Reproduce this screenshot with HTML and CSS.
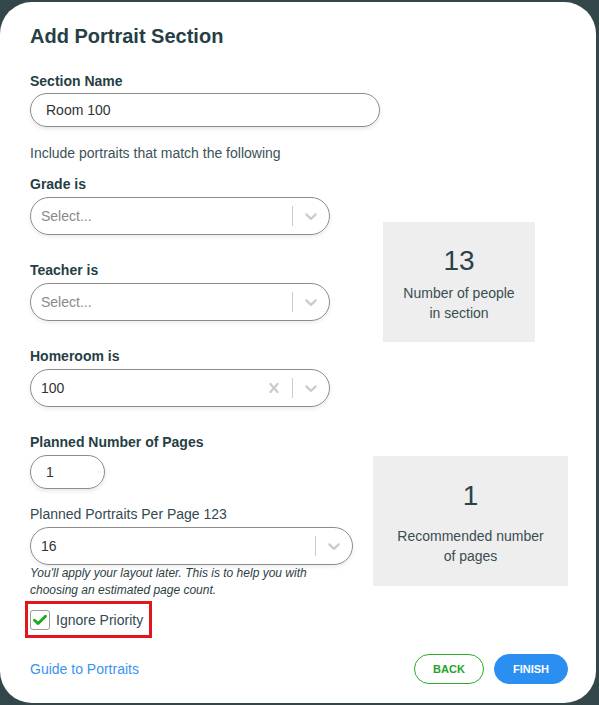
FILE: index.html
```html
<!DOCTYPE html>
<html lang="en">
<head>
<meta charset="utf-8">
<title>Add Portrait Section</title>
<link rel="stylesheet" href="styles.css">
</head>
<body>
<div class="modal">
  <h1 class="title">Add Portrait Section</h1>
  <div class="label label-first">Section Name</div>
  <div class="text-input name-input">Room 100</div>
  <p class="hint">Include portraits that match the following</p>

  <div class="row row-filters">
    <div class="col col-filters">
      <div class="field">
        <div class="label">Grade is</div>
        <div class="select">
          <span class="select-value placeholder">Select...</span>
          <span class="sep"></span>
          <span class="ind"><svg viewBox="0 0 20 20" width="20" height="20"><path d="M4.516 7.548c0.436-0.446 1.043-0.481 1.576 0l3.908 3.747 3.908-3.747c0.533-0.481 1.141-0.446 1.574 0 0.436 0.445 0.408 1.197 0 1.615-0.406 0.418-4.695 4.502-4.695 4.502-0.217 0.223-0.502 0.335-0.787 0.335s-0.57-0.112-0.789-0.335c0 0-4.287-4.084-4.695-4.502s-0.436-1.17 0-1.615z"/></svg></span>
        </div>
      </div>
      <div class="field field-next">
        <div class="label">Teacher is</div>
        <div class="select">
          <span class="select-value placeholder">Select...</span>
          <span class="sep"></span>
          <span class="ind"><svg viewBox="0 0 20 20" width="20" height="20"><path d="M4.516 7.548c0.436-0.446 1.043-0.481 1.576 0l3.908 3.747 3.908-3.747c0.533-0.481 1.141-0.446 1.574 0 0.436 0.445 0.408 1.197 0 1.615-0.406 0.418-4.695 4.502-4.695 4.502-0.217 0.223-0.502 0.335-0.787 0.335s-0.57-0.112-0.789-0.335c0 0-4.287-4.084-4.695-4.502s-0.436-1.17 0-1.615z"/></svg></span>
        </div>
      </div>
      <div class="field field-next">
        <div class="label">Homeroom is</div>
        <div class="select">
          <span class="select-value">100</span>
          <span class="ind"><svg viewBox="0 0 20 20" width="20" height="20"><path d="M14.348 14.849c-0.469 0.469-1.229 0.469-1.697 0l-2.651-3.030-2.651 3.029c-0.469 0.469-1.229 0.469-1.697 0-0.469-0.469-0.469-1.229 0-1.697l2.758-3.15-2.759-3.152c-0.469-0.469-0.469-1.228 0-1.697s1.228-0.469 1.697 0l2.652 3.031 2.651-3.031c0.469-0.469 1.228-0.469 1.697 0s0.469 1.229 0 1.697l-2.758 3.152 2.758 3.15c0.469 0.469 0.469 1.229 0 1.698z"/></svg></span>
          <span class="sep"></span>
          <span class="ind"><svg viewBox="0 0 20 20" width="20" height="20"><path d="M4.516 7.548c0.436-0.446 1.043-0.481 1.576 0l3.908 3.747 3.908-3.747c0.533-0.481 1.141-0.446 1.574 0 0.436 0.445 0.408 1.197 0 1.615-0.406 0.418-4.695 4.502-4.695 4.502-0.217 0.223-0.502 0.335-0.787 0.335s-0.57-0.112-0.789-0.335c0 0-4.287-4.084-4.695-4.502s-0.436-1.17 0-1.615z"/></svg></span>
        </div>
      </div>
    </div>
    <div class="stat stat-people">
      <div class="stat-num">13</div>
      <div class="stat-label">Number of people<br>in section</div>
    </div>
  </div>

  <div class="row row-pages">
    <div class="col col-pages">
      <div class="label">Planned Number of Pages</div>
      <div class="text-input pages-input">1</div>
      <div class="plain-label">Planned Portraits Per Page 123</div>
      <div class="select">
        <span class="select-value">16</span>
        <span class="sep"></span>
        <span class="ind"><svg viewBox="0 0 20 20" width="20" height="20"><path d="M4.516 7.548c0.436-0.446 1.043-0.481 1.576 0l3.908 3.747 3.908-3.747c0.533-0.481 1.141-0.446 1.574 0 0.436 0.445 0.408 1.197 0 1.615-0.406 0.418-4.695 4.502-4.695 4.502-0.217 0.223-0.502 0.335-0.787 0.335s-0.57-0.112-0.789-0.335c0 0-4.287-4.084-4.695-4.502s-0.436-1.17 0-1.615z"/></svg></span>
      </div>
      <p class="help">You'll apply your layout later. This is to help you with choosing an estimated page count.</p>
    </div>
    <div class="stat stat-pages">
      <div class="stat-num">1</div>
      <div class="stat-label stat-label-far">Recommended number<br>of pages</div>
    </div>
  </div>

  <div class="check-wrap">
    <span class="checkbox"><svg viewBox="0 0 14 12" width="14" height="12"><path d="M1.5 6.2 L5.2 9.6 L12.5 2.2" fill="none" stroke="#1ea81e" stroke-width="2.8" stroke-linecap="round" stroke-linejoin="round"/></svg></span>
    <span class="check-label">Ignore Priority</span>
  </div>

  <div class="footer">
    <a class="guide-link" href="#">Guide to Portraits</a>
    <div class="buttons">
      <button class="btn btn-back" type="button">BACK</button>
      <button class="btn btn-finish" type="button">FINISH</button>
    </div>
  </div>
</div>
</body>
</html>
```

FILE: styles.css
```css
* { box-sizing: border-box; }

html, body {
  margin: 0;
  padding: 0;
}

body {
  background: #33474b;
  font-family: "Liberation Sans", Arial, sans-serif;
  color: #263e45;
}

.modal {
  width: 596px;
  margin: 2px 3px 0 0;
  background: #ffffff;
  border-radius: 32px;
  padding: 22px 28px 19px 30px;
}

.title {
  margin: 0;
  font-size: 20px;
  line-height: 24px;
  font-weight: bold;
  color: #263e46;
}

.label {
  font-size: 14px;
  line-height: 16px;
  font-weight: bold;
  color: #263e45;
  margin-bottom: 5px;
}

.label-first {
  margin-top: 25px;
  margin-bottom: 4px;
}

.plain-label {
  font-size: 14px;
  line-height: 16px;
  color: #34494f;
  margin-top: 17px;
  margin-bottom: 5px;
}

.text-input {
  height: 34px;
  border: 1px solid #8c8c8c;
  border-radius: 17px;
  font-size: 14px;
  line-height: 32px;
  color: #333;
  box-shadow: 0 2px 4px rgba(0, 0, 0, 0.10);
}

.name-input {
  width: 350px;
  padding-left: 15px;
}

.pages-input {
  width: 75px;
  padding-left: 15px;
}

.hint {
  margin: 18px 0 0;
  font-size: 14px;
  line-height: 16px;
  color: #3d5257;
}

.row {
  display: flex;
  align-items: flex-start;
}

.row-filters { margin-top: 15px; }
.row-pages { margin-top: 27px; }

.col-filters { width: 300px; }
.col-pages { width: 323px; }

.field-next { margin-top: 27px; }

.select {
  display: flex;
  align-items: center;
  height: 38px;
  border: 1px solid #8c8c8c;
  border-radius: 19px;
  box-shadow: 0 2px 4px rgba(0, 0, 0, 0.08);
}

.select-value {
  flex: 1;
  padding-left: 10px;
  font-size: 14px;
  color: #333;
}

.select-value.placeholder { color: #8a8a8a; }

.sep {
  width: 1px;
  height: 20px;
  background: #cccccc;
}

.ind {
  width: 36px;
  display: flex;
  justify-content: center;
  align-items: center;
}

.ind svg { fill: #cccccc; }

.help {
  margin: 0;
  font-size: 12px;
  line-height: 17px;
  font-style: italic;
  color: #2c3e44;
}

.stat {
  background: #eeeeee;
  text-align: center;
  color: #2c4249;
}

.stat-people {
  width: 152px;
  margin-left: 53px;
  margin-top: 46px;
  padding: 23px 0 19px;
}

.stat-pages {
  width: 195px;
  margin-left: 20px;
  margin-top: 22px;
  padding: 24px 0 20px;
}

.stat-num {
  font-size: 28px;
  line-height: 32px;
}

.stat-label {
  margin-top: 6px;
  font-size: 14px;
  line-height: 20px;
  color: #3a4d52;
}

.stat-label-far { margin-top: 14px; }

.check-wrap {
  display: inline-flex;
  align-items: center;
  margin: 2px 0 0 -5px;
  border: 3px solid #e3161e;
  padding: 6px 6px 5px 2px;
}

.checkbox {
  width: 20px;
  height: 20px;
  border: 1px solid #9a9a9a;
  border-radius: 3px;
  display: flex;
  justify-content: center;
  align-items: center;
}

.check-label {
  margin-left: 6px;
  font-size: 14px;
  color: #34494f;
}

.footer {
  display: flex;
  justify-content: space-between;
  align-items: center;
  margin-top: 16px;
}

.guide-link {
  font-size: 14px;
  color: #3994ee;
  text-decoration: none;
}

.buttons {
  display: flex;
  gap: 10px;
}

.btn {
  height: 30px;
  border-radius: 15px;
  font-family: "Liberation Sans", Arial, sans-serif;
  font-size: 11px;
  font-weight: bold;
  padding: 0;
  cursor: pointer;
}

.btn-back {
  width: 70px;
  background: #ffffff;
  border: 1px solid #2bab2b;
  color: #22a22a;
}

.btn-finish {
  width: 74px;
  background: #2b8ff2;
  border: 1px solid #2b8ff2;
  color: #ffffff;
}
```
